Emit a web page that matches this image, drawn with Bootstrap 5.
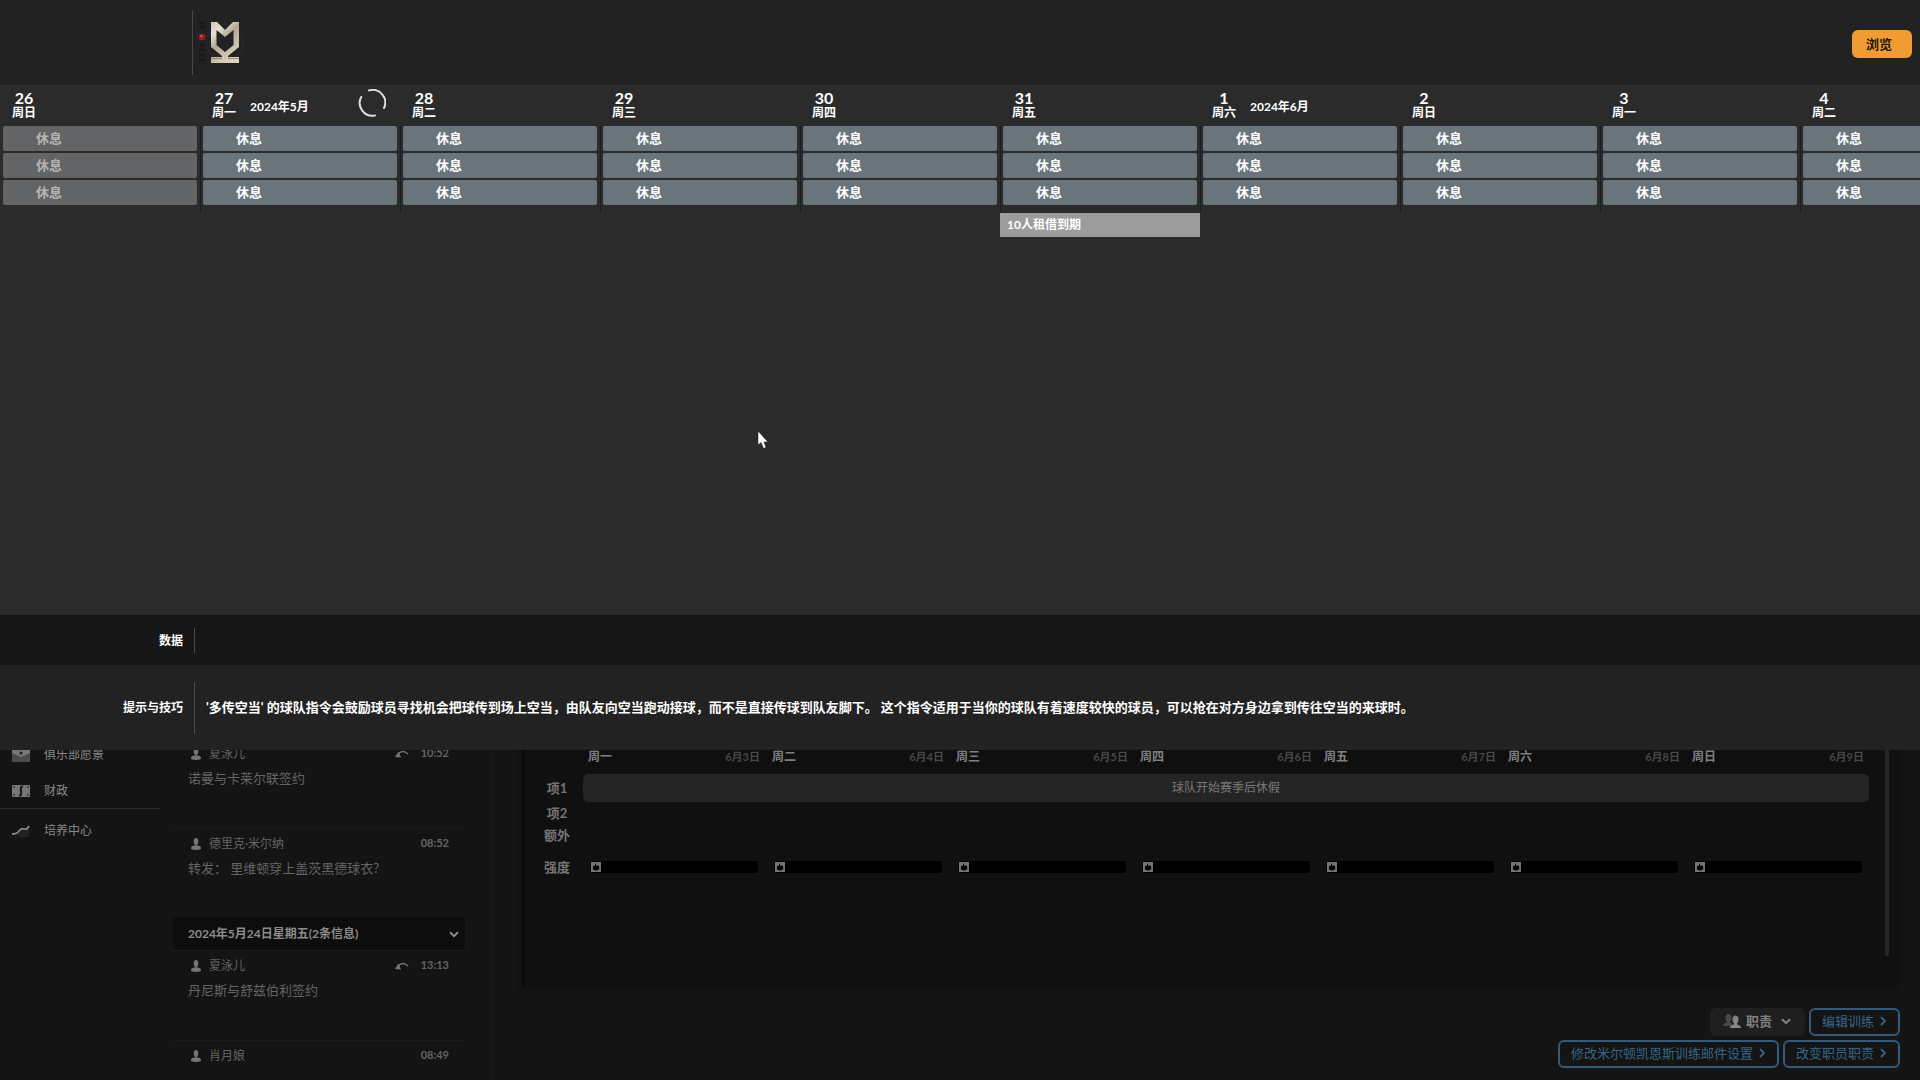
<!DOCTYPE html>
<html lang="zh-CN">
<head>
<meta charset="utf-8">
<meta name="viewport" content="width=device-width, initial-scale=1">
<title>日程</title>
<link href="https://cdn.jsdelivr.net/npm/bootstrap@5.3.0/dist/css/bootstrap.min.css" rel="stylesheet">
<style>
body{font-family:Lato,"Noto Sans CJK SC",sans-serif;font-size:13px;line-height:20px;background:#141414;color:#fff}
.t12{font-size:12px}
.top-bar{height:85px;background:#222}
.gutter{width:192px}
.gutter-text{width:190px;padding-right:7px;padding-top:1px}
.v-rule{width:1px;background:#484848}
.top-rule{margin:10px 0}
.tips-rule{margin:17px 0 16px}
.crest,.btn-browse{flex:none}
.crest{margin-top:17px}
.btn-browse{--bs-btn-bg:#f09c33;--bs-btn-color:#1d1608;--bs-btn-hover-bg:#ffad48;--bs-btn-border-radius:6px;--bs-btn-padding-x:14px;--bs-btn-padding-y:2px;--bs-btn-font-size:13px;--bs-btn-font-weight:700;line-height:20px;height:28px;width:60px;margin-top:30px}
.calendar{background:#2b2b2b;border-top:1px solid #2e2e2e}
.day{flex:0 0 200px}
.day-head{height:40px;padding:3px 13px 0 12px}
.day-num{font-size:16px;line-height:17px}
.day-week{font-size:12px;line-height:14px}
.month-label{margin-left:14px;padding-top:10px;font-size:12px;line-height:16px}
.spinner{flex:none;margin-right:1px}
.slots{height:87px;border-left:1px solid #1d1d1d;padding:0 3px 0 2px}
.day:first-child .slots{border-color:transparent}
.slot{height:25px;margin-bottom:2px;padding-left:33px;background:#69747b;border-radius:2px;line-height:24px}
.slot-past{background:#636465;color:#b4b4b4}
.loan{height:24px;background:#9c9c9c;padding-left:7px;font-size:12px;line-height:24px}
.data-bar{height:50px;background:#161616}
.tips-bar{height:85px;background:#222}
.tip{padding:0 0 2px 11px}
.lower{flex:0 0 360px;margin-top:-30px;background:#141414;color:#646464}
.side{flex:0 0 160px;padding-top:17px}
.side a{height:36px;padding-left:12px;gap:14px;color:#8a8a8a;font-size:12px}
.side-next{border-top:1px solid #292929;padding-top:4px;margin-top:-1px}
.inbox{flex:0 0 333px;padding:18px 27px 0 13px;border-right:1px solid #191919}
.msg{height:90px;border-top:1px solid #1b1b1b;padding:5px 16px 0 15px}
.msg-from{height:20px;gap:8px;padding-left:3px;font-size:12px}
.msg-time{width:32px;text-align:right;font-weight:700;font-size:11px;line-height:16px;padding-bottom:2px}
.msg-group{height:32px;width:100%;padding:0 6px 0 15px;border:0;border-radius:3px;background:#0d0d0d;color:#8c8c8c;font-size:12px}
.planner{height:270px;padding-left:6px;background:#111}
.planner-body{border-left:3px solid #0a0a0a;background:#101010;height:266px}
.plan{width:1346px;table-layout:fixed;margin:20px 0 0}
.plan th,.plan td{padding:0}
.plan thead tr{height:34px;background:#0f0f0f}
.plan .lbl{width:58px;text-align:center;color:#747474;padding:0 0 1px 6px;font-weight:700}
.plan .wk{padding:7px 7px 0 5px;vertical-align:top}
.wk-name{color:#808080}
.wk-date{color:#484848;font-size:11px}
.holiday{height:28px;margin-right:2px;border-radius:5px;background:#242424;color:#7a7a7a;font-size:12px;line-height:28px}
.meter{height:12px;margin:0 9px 0 7px;background:#000;border-radius:2px;padding:1px}
.scroller{width:4px;height:236px;border-radius:2px;background:#262626;margin-right:11px}
.actions{padding-bottom:12px}
.act{height:28px;border-radius:6px;padding:0 12px 2px 11px;font-size:13px;line-height:20px;--bs-btn-color:#356588;--bs-btn-border-color:#34597a;border-width:2px;gap:6px}
.act-menu{--bs-btn-color:#828282;--bs-btn-bg:#1f1f1f;border:0;padding:0 14px 2px 13px;gap:5px;font-weight:700}
.pointer{left:757px;top:430px}
</style>
</head>
<body class="vh-100 d-flex flex-column overflow-hidden">
<svg width="0" height="0" class="position-absolute" aria-hidden="true">
  <symbol id="person" viewBox="0 0 10 12"><ellipse cx="5" cy="3.400" rx="2.300" ry="3.400"/><path d="M4.200 6h1.600v2.500H4.200zM0 10.300C0 8 2.500 7.600 5 7.600s5 .4 5 2.700Q10 12 5 12T0 10.300z"/></symbol>
  <symbol id="reply" viewBox="0 0 14 8"><path d="M0 7 3.500 1.500l2.500 6z"/><path d="M3 4Q8-1 13 4" fill="none" stroke="currentColor" stroke-width="1.300"/></symbol>
  <symbol id="down" viewBox="0 0 10 7"><path d="M1 1.200 5 5.200 9 1.200" fill="none" stroke="currentColor" stroke-width="2"/></symbol>
  <symbol id="next" viewBox="0 0 6 10"><path d="M1 1 5 5 1 9" fill="none" stroke="currentColor" stroke-width="1.800"/></symbol>
  <symbol id="flame" viewBox="0 0 10 10"><path fill="#747474" d="M0 0h10v10H0z"/><path d="M4.300 1 5.800 4l1.300-1L8.200 5c.6 2-.9 3.600-3.200 3.600S1.300 7 1.900 5l.8-1.600.9 1z"/></symbol>
</svg>

<header class="top-bar d-flex flex-shrink-0">
  <div class="gutter"></div>
  <div class="v-rule top-rule"></div>
  <svg class="crest ms-1" width="50" height="50" viewBox="0 0 50 50" role="img" aria-label="米尔顿凯恩斯">
    <defs><linearGradient id="g" x2=".6" y2="1"><stop stop-color="#cfc5b3"/><stop offset=".25" stop-color="#e9e1d2"/><stop offset=".5" stop-color="#b3a690"/><stop offset="1" stop-color="#ddd3c0"/></linearGradient></defs>
    <path d="M2 6h6M3 10h5M3 28h4M2 33h6M3 38h4M2 43h6" stroke="#181818" stroke-width="3"/>
    <circle cx="28" cy="25" r="18" fill="none" stroke="#2c2c2c"/>
    <circle cx="5" cy="20" r="3.300" fill="#a01926"/><circle cx="4.300" cy="19" r="1" fill="#d56a70"/>
    <path fill="url(#g)" fill-rule="evenodd" d="M14 5h6l8 8 8-8h6v25l-11 9v1h11v6H14v-6h11v-1l-11-9zm5.500 8v15l8.500 7 8.500-7V13L28 20z"/>
    <path d="M14 41.500h11M31 41.500h11" stroke="#978b78"/>
  </svg>
  <button class="btn btn-browse border-0 ms-auto me-2 text-start" type="button">浏览</button>
</header>

<main class="calendar flex-grow-1 d-flex overflow-hidden fw-bold" id="calendar"></main>

<section class="data-bar d-flex align-items-center flex-shrink-0">
  <div class="gutter-text text-end fw-bold t12">数据</div>
  <div class="v-rule h-50 ms-1"></div>
</section>
<section class="tips-bar d-flex align-items-center flex-shrink-0 position-relative z-1">
  <div class="gutter-text text-end fw-bold t12">提示与技巧</div>
  <div class="v-rule tips-rule ms-1 align-self-stretch"></div>
  <p class="tip m-0 fw-bold text-nowrap">'多传空当' 的球队指令会鼓励球员寻找机会把球传到场上空当，由队友向空当跑动接球，而不是直接传球到队友脚下。 这个指令适用于当你的球队有着速度较快的球员，可以抢在对方身边拿到传往空当的来球时。</p>
</section>

<section class="lower d-flex overflow-hidden">
  <nav class="side">
    <a href="#" class="d-flex align-items-center text-decoration-none">
      <svg width="18" height="14" viewBox="0 0 18 14"><path fill="#4c4c4c" d="M0 0h18v14H0z"/><path fill="#777" d="M0 0h18v5L9 9 0 5z"/><circle cx="9" cy="5" r="1.500" fill="#222"/></svg>俱乐部愿景</a>
    <a href="#" class="d-flex align-items-center text-decoration-none">
      <svg width="18" height="12" viewBox="0 0 18 12"><rect width="18" height="12" rx="1" fill="#777"/><path d="M11 1.500Q8 1 9 6T7 10.500" fill="none" stroke="#151515" stroke-width="2"/><path d="M1.500 1.500h2l-2 2zM16.500 1.500h-2l2 2zM1.500 10.500h2l-2-2zM16.500 10.500h-2l2-2z" fill="#151515"/></svg>财政</a>
    <div class="side-next"><a href="#" class="d-flex align-items-center text-decoration-none">
      <svg width="18" height="12" viewBox="0 0 18 12"><path d="M0 9h5l6-4 6-2v9H9z" fill="#222"/><path d="M0 9Q5 9 7 6T12 4 17 1" fill="none" stroke="#858585" stroke-width="1.800"/></svg>培养中心</a></div>
  </nav>
  <div class="inbox" id="inbox"></div>
  <div class="flex-grow-1 d-flex flex-column" style="padding:0 20px 0 23px">
    <div class="planner">
      <div class="planner-body d-flex justify-content-between align-items-start">
        <table class="plan">
          <thead><tr id="days"><th class="lbl"></th></tr></thead>
          <tbody>
            <tr style="height:28px"><th class="lbl" scope="row">项1</th><td colspan="7"><div class="holiday text-center">球队开始赛季后休假</div></td></tr>
            <tr style="height:22px"><th class="lbl" scope="row">项2</th><td colspan="7"></td></tr>
            <tr style="height:22px"><th class="lbl" scope="row">额外</th><td colspan="7"></td></tr>
            <tr style="height:42px" id="meters"><th class="lbl" scope="row">强度</th></tr>
          </tbody>
        </table>
        <div class="scroller"></div>
      </div>
    </div>
    <div class="actions d-flex flex-column gap-1 mt-auto">
      <div class="d-flex justify-content-end gap-1">
        <button type="button" class="btn act act-menu d-flex align-items-center"><svg width="18" height="14" viewBox="0 0 18 14"><g fill="#484848"><ellipse cx="5.500" cy="4" rx="3" ry="4"/><path d="M0 12q0-3 4-3.500V7h3v1.500q3 .5 3 3.500z"/></g><g fill="#858585"><ellipse cx="12.500" cy="5.500" rx="3" ry="4"/><path d="M7 14q0-3 4-3.500V9h3v1.500q4 .5 4 3.500z"/></g></svg>职责<svg class="ms-1" width="10" height="7"><use href="#down"/></svg></button>
        <a href="#" class="btn act d-flex align-items-center">编辑训练<svg width="6" height="10"><use href="#next"/></svg></a>
      </div>
      <div class="d-flex justify-content-end gap-1">
        <a href="#" class="btn act d-flex align-items-center">修改米尔顿凯恩斯训练邮件设置<svg width="6" height="10"><use href="#next"/></svg></a>
        <a href="#" class="btn act d-flex align-items-center">改变职员职责<svg width="6" height="10"><use href="#next"/></svg></a>
      </div>
    </div>
  </div>
</section>

<svg class="pointer position-absolute z-3" width="14" height="20" viewBox="0 0 14 20" aria-hidden="true"><path d="M1 1v14l3-2.500 2.500 6L9 17.500 7 12h4z" fill="#fff" stroke="#111" stroke-width=".5"/></svg>

<script src="https://cdn.jsdelivr.net/npm/bootstrap@5.3.0/dist/js/bootstrap.bundle.min.js"></script>
<script>
const days=[[26,'日'],[27,'一','2024年5月'],[28,'二'],[29,'三'],[30,'四'],[31,'五'],[1,'六','2024年6月'],[2,'日'],[3,'一'],[4,'二']];
const spinner='<svg class="spinner ms-auto" width="28" height="28" viewBox="0 0 28 28"><g fill="none" stroke="#ddd" stroke-width="2" stroke-linecap="round"><path d="M11 1.400A12.700 12.700 0 0 1 26 19"/><path d="M3.200 8A12.700 12.700 0 0 0 17 26.400"/></g></svg>';
document.getElementById('calendar').innerHTML=days.map(([n,w,m],i)=>`
<div class="day"><div class="day-head d-flex"><div class="text-center"><div class="day-num">${n}</div><div class="day-week">周${w}</div></div>
${m?`<div class="month-label">${m}</div>`:''}${i===1?spinner:''}</div>
<div class="slots">${`<div class="slot${i?'':' slot-past'}">休息</div>`.repeat(3)}</div>
${n===31?'<div class="loan">10人租借到期</div>':''}</div>`).join('');

const msg=(from,time,subject,reply)=>`<article class="msg"><div class="msg-from d-flex align-items-center">
<svg width="10" height="12" fill="#747474"><use href="#person"/></svg><span class="me-auto">${from}</span>
${reply?'<svg width="14" height="8" fill="#747474" color="#747474"><use href="#reply"/></svg>':''}<time class="msg-time">${time}</time></div>
<div class="mt-1">${subject}</div></article>`;
document.getElementById('inbox').innerHTML=
msg('夏泳儿','10:52','诺曼与卡莱尔联签约',true)+
msg('德里克·米尔纳','08:52','转发： 里维顿穿上盖茨黑德球衣?')+
'<button type="button" class="msg-group d-flex align-items-center justify-content-between fw-bold">2024年5月24日星期五(2条信息)<svg width="10" height="7"><use href="#down"/></svg></button>'+
msg('夏泳儿','13:13','丹尼斯与舒兹伯利签约',true)+
msg('肖月娘','08:49','');

'一二三四五六日'.split('').forEach((w,i)=>{
  document.getElementById('days').insertAdjacentHTML('beforeend',`<th class="wk t12" scope="col"><div class="d-flex justify-content-between"><span class="wk-name">周${w}</span><span class="wk-date">6月${i+3}日</span></div></th>`);
  document.getElementById('meters').insertAdjacentHTML('beforeend','<td><div class="meter"><svg class="d-block" width="10" height="10"><use href="#flame"/></svg></div></td>');
});
</script>
</body>
</html>
